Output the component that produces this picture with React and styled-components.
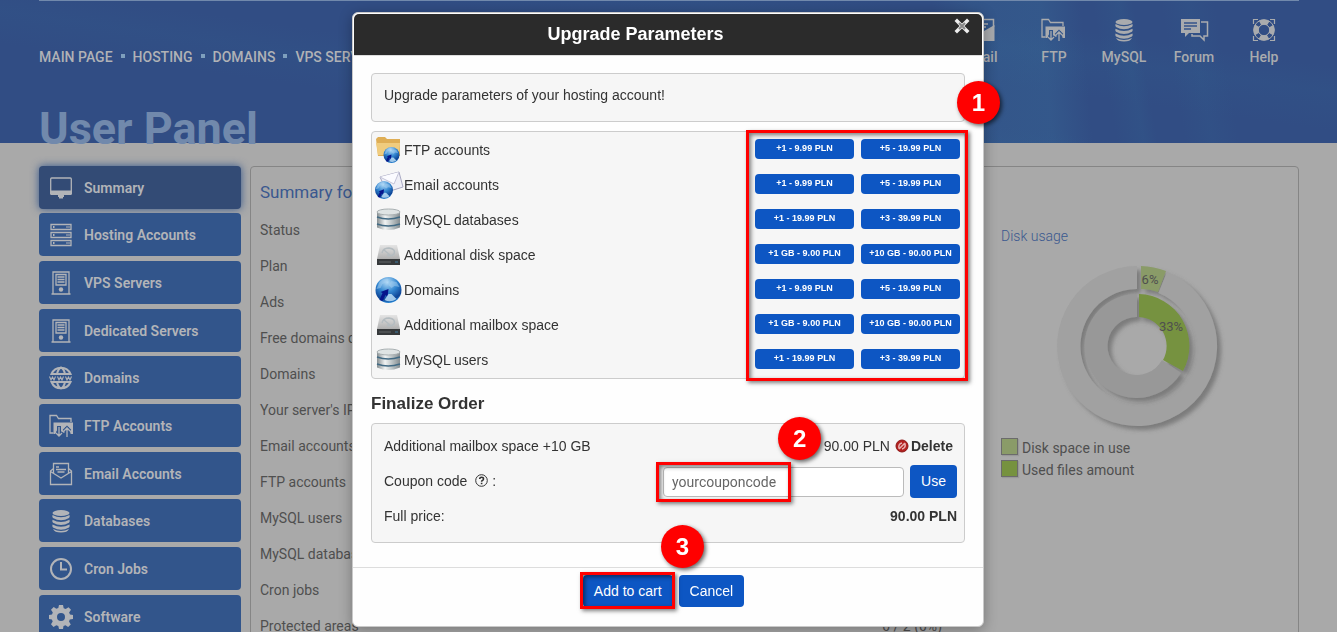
import React from 'react';
import styled, { createGlobalStyle, css } from 'styled-components';

const GlobalStyle = createGlobalStyle`
    * {
        box-sizing: border-box;
    }

    body {
        margin: 0;
        overflow: hidden;
        background-color: #a9a9a9;
        font-family: Roboto, sans-serif;
        font-size: 14px;
        color: #4f4f4f;
    }

    ul, h1, h2, h3, p {
        margin: 0;
        padding: 0;
        list-style-type: none;
    }

    a {
        color: inherit;
        text-decoration: none;
    }
`;

const StyledPage = styled.div`
    height: 100vh;
    overflow: hidden;
`;

const StyledHeader = styled.header`
    height: 143px;
    padding: 0 38px 0 39px;
    background-color: #314d84;
    background-image:
        linear-gradient(85deg, transparent 70%, rgba(60, 120, 160, 0.2) 73%, rgba(60, 120, 160, 0.25) 78%, transparent 81%),
        linear-gradient(80deg, transparent 82%, rgba(50, 100, 145, 0.2) 84%, transparent 85%, transparent 87%, rgba(50, 100, 145, 0.15) 89%, transparent 91%),
        linear-gradient(8deg, transparent 30%, rgba(50, 100, 145, 0.12) 40%, transparent 48%, transparent 60%, rgba(50, 100, 145, 0.14) 72%, transparent 80%);

    .bar {
        display: flex;
        justify-content: space-between;
        height: 107px;
        border-top: 1px solid #7189ac;
    }

    h1 {
        color: #7189ac;
        font-size: 45px;
        font-weight: 700;
        line-height: 44px;
    }
`;

const MainNav = styled.nav`
    display: flex;
    align-items: center;
    align-self: flex-start;
    gap: 8px;
    margin-top: 46px;
    color: #b0b2b6;
    font-weight: 500;
    line-height: 20px;
    white-space: nowrap;

    i {
        width: 4px;
        height: 4px;
        margin-bottom: 2px;
        background-color: #7e9fbd;
    }
`;

const QuickLinks = styled.nav`
    display: flex;
    margin-top: 17px;

    a {
        display: flex;
        flex-direction: column;
        align-items: center;
        gap: 5px;
        width: 70px;
        color: #a9abae;
        font-weight: 500;
        line-height: 20px;
    }
`;

const StyledMain = styled.main`
    display: flex;
    align-items: flex-start;
    gap: 9px;
    padding: 23px 38px 0 39px;
`;

const Sidebar = styled.ul`
    flex: none;
    width: 202px;

    li + li {
        margin-top: 5px;
    }

    li:nth-child(3n + 2) {
        margin-top: 4px;
    }
`;

const SideLink = styled.a`
    display: flex;
    align-items: center;
    gap: 11px;
    height: 43px;
    padding-left: 10px;
    border-radius: 4px;
    background-color: #32558b;
    color: #b2b4b8;
    font-weight: 600;

    ${({ $active }) => $active && css`
        background-color: #334b75;
        box-shadow: 0 0 8px #32558b;
    `}
`;

const Content = styled.section`
    display: flex;
    flex: 1;
    justify-content: space-between;
    min-height: 500px;
    padding: 7px 0 0 9px;
    border: 1px solid #858585;
    border-radius: 4px;

    .summary {
        flex: 1;
    }

    h2 {
        margin-bottom: 2px;
        color: #3a588f;
        font-size: 17px;
        font-weight: 400;
        line-height: 36px;
    }

    h3 {
        color: #3a588f;
        font-size: 14px;
        font-weight: 300;
        line-height: 20px;
    }
`;

const SummaryTable = styled.table`
    width: 100%;
    border-collapse: collapse;
    line-height: 20px;

    th, td {
        height: 36px;
        padding: 0;
        font-weight: 400;
        text-align: left;
    }

    td {
        text-align: right;
    }
`;

const Usage = styled.aside`
    width: 297px;
    margin-left: 59px;
    padding-top: 52px;

    svg {
        display: block;
        margin: 10px 0 0 46px;
    }

    ul {
        margin-top: 1px;
    }
`;

const Legend = styled.li`
    display: flex;
    gap: 4px;
    height: 22px;
    line-height: 22px;

    &::before {
        content: '';
        width: 15px;
        height: 15px;
        margin-top: 1px;
        border: 1px solid #6b6b6b;
        background-color: ${({ $color }) => $color};
        box-shadow: 1px 1px 1px #999;
    }
`;

const Overlay = styled.div`
    position: fixed;
    inset: 0;
    display: flex;
    align-items: flex-start;
    justify-content: center;
    padding: 12px 1px 0 0;
`;

const Dialog = styled.section`
    width: 632px;
    border: 1px solid #c9c9c9;
    border-radius: 6px;
    background-color: #fefefe;
    box-shadow: 0 3px 14px rgba(0, 0, 0, 0.3);
    color: #333;
    font-family: 'Liberation Sans', Arial, sans-serif;
    line-height: 20px;
`;

const DialogHeader = styled.header`
    display: flex;
    align-items: flex-start;
    height: 42px;
    margin: 1px 1px 0;
    padding-right: 12px;
    border-bottom: 1px solid #ddd;
    border-radius: 5px 5px 0 0;
    background-color: #2b2b2b;

    h2 {
        flex: 1;
        color: #fff;
        font-size: 18px;
        line-height: 40px;
        text-align: center;
    }
`;

const CloseButton = styled.button`
    width: 16px;
    height: 16px;
    margin: 4px 0 0 37px;
    padding: 0;
    border: 0;
    background: none;

    svg {
        display: block;
    }
`;

const DialogBody = styled.div`
    padding: 17px 18px 24px;

    h3 {
        margin: 15px 0 9px;
        font-size: 17px;
        line-height: 20px;
    }
`;

const Panel = styled.div`
    border: 1px solid #ccc;
    border-radius: 4px;
    background-color: #f6f6f6;
`;

const Notice = styled(Panel)`
    margin-bottom: 9px;
    padding: 11px 12px 16px;
`;

const Options = styled(Panel)`
    display: flex;
    justify-content: space-between;
    padding: 0 3px 1px;
`;

const OptionNames = styled.ul`
    li {
        display: flex;
        align-items: center;
        gap: 3px;
        height: 35px;
        line-height: 20px;
    }
`;

const OptionPrices = styled.div`
    position: relative;
    display: grid;
    grid-template-columns: 99px 99px;
    grid-auto-rows: 20px;
    gap: 15px 7px;
    padding: 7px 1px 0 0;
`;

const Button = styled.button`
    padding: 0 11px;
    border: 0;
    border-radius: 4px;
    background-color: #0d56c3;
    color: #fff;
    font-family: inherit;
    font-size: 14px;
    line-height: ${({ $tall }) => ($tall ? '33px' : '32px')};
`;

const PriceButton = styled(Button)`
    padding: 0 0 2px;
    font-size: 9px;
    font-weight: 700;
    line-height: 18px;
`;

const Order = styled(Panel)`
    padding: 5px 7px 8px 12px;
`;

const OrderRow = styled.div`
    display: flex;
    align-items: center;
    justify-content: space-between;
    height: 35px;

    > span, label, strong {
        padding-bottom: 2px;
    }

    label {
        display: flex;
        align-items: center;
        gap: 4px;
    }

    label svg {
        margin-left: 4px;
    }
`;

const Amount = styled.span`
    display: flex;
    align-items: center;
    gap: 5px;
    padding-right: 4px;

    a {
        display: flex;
        align-items: center;
        gap: 2px;
        font-weight: 700;
    }
`;

const Coupon = styled.div`
    position: relative;
    display: flex;
    align-items: center;
    gap: 6px;

    input {
        width: 241px;
        height: 30px;
        padding: 0 8px;
        border: 1px solid #bbb;
        border-radius: 4px;
        background-color: #fff;
        color: #666;
        font-family: Roboto, sans-serif;
        font-size: 14px;
    }
`;

const DialogFooter = styled.footer`
    display: flex;
    justify-content: center;
    gap: 6px;
    padding: 7px 9px 19px 0;
    border-top: 1px solid #ddd;
`;

const CartAction = styled.div`
    position: relative;
`;

// red frames drawn over the controls of each step
const Frame = styled.span`
    position: absolute;
    inset: ${({ $inset }) => $inset};
    border: 3px solid #f00;
    box-shadow: 2px 2px 4px rgba(0, 0, 0, 0.5), inset 2px 2px 4px rgba(0, 0, 0, 0.5);
    pointer-events: none;
`;

const Step = styled.span`
    position: absolute;
    top: ${({ $top }) => $top};
    left: ${({ $left }) => $left};
    width: 43px;
    height: 43px;
    border-radius: 50%;
    background-color: #f00;
    box-shadow: 2px 2px 4px rgba(0, 0, 0, 0.6);
    color: #fff;
    font-size: 24px;
    font-weight: 700;
    line-height: 43px;
    text-align: center;
`;

const line = { fill: 'none', stroke: 'currentColor', strokeWidth: 1.5 };

const FtpShape = () => (
    <>
        <path d="M4.500 19H1V1.500h6.500l2 3H22V8" {...line} strokeWidth="1.300" />
        <path d="M4.500 8.500H24V20h-2.500v-1L19 14l-4 5-3.500-2L10 13l-3 5v2H4.500z" fill="currentColor" />
        <path d="M10 12v10M18 23V13" fill="none" stroke="#32558b" strokeWidth="4" />
        <path d="M10 13v9m-3-3 3 3 3-3M18 23v-9m-3 3 3-3 3 3" fill="none" stroke="#32558b" strokeWidth="3.500" />
        <path d="M10 13v9m-3-3 3 3 3-3M18 23v-9m-3 3 3-3 3 3" {...line} strokeWidth="1.300" />
    </>
);

const DatabaseShape = () => (
    <g fill="currentColor">
        <ellipse cx="12" cy="4" rx="8.500" ry="3" />
        <path d="M3.500 6q8.500 4.500 17 0 .6 1.800-.5 3-8 4.500-16 0-1.100-1.200-.5-3zM3.500 10.700q8.500 4.500 17 0 .6 1.800-.5 3-8 4.500-16 0-1.100-1.200-.5-3zM3.500 15.500q8.500 4.500 17 0 .6 1.800-.5 3-8 4.500-16 0-1.100-1.200-.5-3z" />
        <path d="M4 20q8 4 16 0-1.500 3.500-8 3.500T4 20z" />
    </g>
);

const shapes = {
    summary: (
        <>
            <rect x="1.700" y="2" width="20.600" height="16" rx="1" {...line} strokeWidth="1.300" />
            <path d="M1 14.500h22V18l-1 1h-7v2h-1v1.500h-4V21H9v-2H2l-1-1z" fill="currentColor" />
        </>
    ),
    hosting: (
        <>
            <path d="M2 1.500h20v5H2zM2 9.500h20v5H2zM2 17.500h20v5H2z" {...line} strokeWidth="1.300" />
            <path d="M4 4h1.500m12 0h1m1 0h1M4 12h1.500m12 0h1m1 0h1M4 20h1.500m12 0h1m1 0h1" {...line} strokeWidth="2" />
        </>
    ),
    server: (
        <>
            <path d="M4 22.500V1h16v21.500M2.500 23h19M7 3.500h10V14H7zM8.500 6h7M8.500 8.500h7M8.500 11h7" {...line} strokeWidth="1.300" />
            <circle cx="12" cy="18.500" r="2.200" fill="currentColor" />
        </>
    ),
    domains: (
        <>
            <path d="M2.500 8a10.300 10.300 0 0 1 19 0zM2.500 16a10.300 10.300 0 0 0 19 0zM8 8q1-5 4-6.500 3 1.500 4 6.500M8 16q1 5 4 6.500 3-1.500 4-6.500" {...line} strokeWidth="2" />
            <path d="m.5 10.500 1.500 3.500 1.500-3 1.500 3 1.500-3.500m2 0 1.500 3.500 1.500-3 1.500 3 1.500-3.500m2 0 1.500 3.500 1.500-3 1.500 3 1.500-3.500" {...line} strokeWidth="1.100" />
        </>
    ),
    ftp: <FtpShape />,
    email: (
        <>
            <path d="M4.500 11V1.500h15V11M4.500 6.500 1.500 9v13.500h21V9l-3-2.500M1.500 9.500 12 16l10.500-6.500" {...line} strokeWidth="1.300" />
            <path d="M7 5h3M7 7.500h10M8.500 10h7" {...line} strokeWidth="1.300" />
        </>
    ),
    database: <DatabaseShape />,
    cron: (
        <>
            <circle cx="12" cy="12" r="10" {...line} strokeWidth="2" />
            <path d="M12 5v7.500h6" {...line} strokeWidth="2" />
        </>
    ),
    software: (
        <path
            fill="currentColor"
            fillRule="evenodd"
            d="M10 0h4l.7 3.300 2 .8L19.500 2.200l2.500 2.600-1.900 2.700.9 2.100L24 10v4l-3.200.6-.8 2 1.800 2.900-2.700 2.500-2.600-1.800-2 .9L14 24h-4l-.7-3-2-.8-2.800 1.700L2 19.200l1.700-2.700-.8-2L0 14v-4l3-.6.8-2L2 4.700 4.700 2l2.600 1.800 2-.8zM12 8a4 4 0 1 0 0 8 4 4 0 0 0 0-8z"
        />
    ),
    mail: (
        <>
            <path d="M3 13V1.500h18.500V9M7 6h9M7 9h7" {...line} />
            <path d="M1 13h11L22.500 7v16H1z" fill="currentColor" />
        </>
    ),
    forum: (
        <>
            <path d="M0 1h19v14H8l-4 4v-4H0z" fill="currentColor" />
            <path d="M3 5h13M3 8h13M3 11h7" fill="none" stroke="#35548a" strokeWidth="1.500" />
            <path d="M20 4h6.500v14H23v4l-4-4h-8v-2" {...line} />
        </>
    ),
    help: (
        <>
            <circle cx="12" cy="12" r="8" fill="none" stroke="currentColor" strokeWidth="5" strokeDasharray="8.566 4" strokeDashoffset="4.283" />
            <circle cx="12" cy="12" r="10.300" {...line} strokeWidth="1" />
            <circle cx="12" cy="12" r="5.700" {...line} strokeWidth="1" />
            <path d="M1.500 6V1.500H6M18 1.500h4.500V6M22.500 18v4.500H18M6 22.500H1.500V18" {...line} strokeWidth="1.200" />
        </>
    ),
};

const Icon = ({ name, wide }) => (
    <svg width={wide ? 28 : 24} height="24" viewBox={wide ? '-1 0 28 24' : '0 0 24 24'} overflow="visible" aria-hidden="true">
        {shapes[name]}
    </svg>
);

const Globe = ({ x, y, r }) => (
    <g transform={`translate(${x} ${y}) scale(${r / 13})`}>
        <circle r="13" fill="url(#globe)" />
        <path d="M-9-8q4-4 9-3l-1 3-5 2-2 4-4 1zM3-9l5 1 3 5-5-1-3 2-3-3z" fill="#a9d2f2" opacity="0.5" />
        <path d="M-9 10-6 3l-2-1 8-3-1 8-2-2-3 6z" fill="#06158c" />
        <path d="M-4 10 0 4h3l5 5q-6 4-12 1z" fill="#c4e7fc" opacity="0.8" />
    </g>
);

const optionArt = {
    ftp: (
        <>
            <path d="M1 3 3 1h7l2 2h13v17H3z" fill="#dfae55" />
            <path d="M1 7h24l-1 12H3z" fill="#f0cc7e" />
            <Globe x="16.500" y="19" r="8" />
        </>
    ),
    email: (
        <>
            <path d="m5 6 19-5 4 15-16 5z" fill="#eeeef6" stroke="#a9a9c3" />
            <path d="m5 6 14 7 5-12" fill="#fbfbff" stroke="#c4c4d8" />
            <Globe x="9" y="19" r="9" />
        </>
    ),
    database: (
        <>
            <path d="M2 5.500v16q11 5 23 0v-16z" fill="url(#metal)" />
            <ellipse cx="13.500" cy="6" rx="11.500" ry="3" fill="#dfe4e4" stroke="#a9b0b2" />
            <path d="M2 11q11 4 23 0M2 18q11 4 23 0" fill="none" stroke="#416a84" strokeWidth="1.500" />
        </>
    ),
    disk: (
        <>
            <path d="M5 4h17l3 14H2z" fill="url(#plate)" />
            <path d="M7 12q1-5 7-5 7 1 5 6-3 3-7 1M9 9l6 5" fill="none" stroke="#b4bcc0" strokeWidth="1.500" />
            <path d="M2 18h23v6H2z" fill="#36393b" />
            <path d="M4 21h12" stroke="#626669" />
            <path d="M20 21h3" stroke="#3f7da2" />
        </>
    ),
    domains: <Globe x="13.500" y="14" r="13" />,
};

const OptionIcon = ({ name }) => (
    <svg width="26" height="28" viewBox="0 0 26 28" overflow="visible" aria-hidden="true">
        <defs>
            <radialGradient id="globe" cx="0.450" cy="0.200" r="0.850">
                <stop offset="0" stopColor="#b5dcf7" />
                <stop offset="0.450" stopColor="#3286d0" />
                <stop offset="0.800" stopColor="#0d4395" />
                <stop offset="1" stopColor="#36a7f5" />
            </radialGradient>
            <linearGradient id="metal">
                <stop offset="0" stopColor="#858d90" />
                <stop offset="0.350" stopColor="#f0f3f3" />
                <stop offset="0.700" stopColor="#b4bcbe" />
                <stop offset="1" stopColor="#858d90" />
            </linearGradient>
            <linearGradient id="plate" x2="0" y2="1">
                <stop offset="0" stopColor="#e4e4e4" />
                <stop offset="1" stopColor="#b0b0b0" />
            </linearGradient>
        </defs>
        {optionArt[name]}
    </svg>
);

const navItems = ['MAIN PAGE', 'HOSTING', 'DOMAINS', 'VPS SERVERS'];

const quickItems = [
    { label: 'Mail', icon: 'mail' },
    { label: 'FTP', icon: 'ftp', wide: true },
    { label: 'MySQL', icon: 'database' },
    { label: 'Forum', icon: 'forum', wide: true },
    { label: 'Help', icon: 'help' },
];

const sideItems = [
    { label: 'Summary', icon: 'summary' },
    { label: 'Hosting Accounts', icon: 'hosting' },
    { label: 'VPS Servers', icon: 'server' },
    { label: 'Dedicated Servers', icon: 'server' },
    { label: 'Domains', icon: 'domains' },
    { label: 'FTP Accounts', icon: 'ftp' },
    { label: 'Email Accounts', icon: 'email' },
    { label: 'Databases', icon: 'database' },
    { label: 'Cron Jobs', icon: 'cron' },
    { label: 'Software', icon: 'software' },
];

const summaryRows = [
    ['Status'],
    ['Plan'],
    ['Ads'],
    ['Free domains quota'],
    ['Domains'],
    ["Your server's IP"],
    ['Email accounts'],
    ['FTP accounts'],
    ['MySQL users'],
    ['MySQL databases'],
    ['Cron jobs'],
    ['Protected areas', '0 / 2 (0%)'],
];

const options = [
    { name: 'FTP accounts', icon: 'ftp', prices: ['+1 - 9.99 PLN', '+5 - 19.99 PLN'] },
    { name: 'Email accounts', icon: 'email', prices: ['+1 - 9.99 PLN', '+5 - 19.99 PLN'] },
    { name: 'MySQL databases', icon: 'database', prices: ['+1 - 19.99 PLN', '+3 - 39.99 PLN'] },
    { name: 'Additional disk space', icon: 'disk', prices: ['+1 GB - 9.00 PLN', '+10 GB - 90.00 PLN'] },
    { name: 'Domains', icon: 'domains', prices: ['+1 - 9.99 PLN', '+5 - 19.99 PLN'] },
    { name: 'Additional mailbox space', icon: 'disk', prices: ['+1 GB - 9.00 PLN', '+10 GB - 90.00 PLN'] },
    { name: 'MySQL users', icon: 'database', prices: ['+1 - 19.99 PLN', '+3 - 39.99 PLN'] },
];

const UsageChart = () => (
    <svg width="180" height="180" viewBox="-90 -90 180 180" role="img" aria-label="Disk usage">
        <defs>
            <filter id="drop" x="-20%" y="-20%" width="150%" height="150%">
                <feDropShadow dx="4" dy="4" stdDeviation="2" floodColor="#555" floodOpacity="0.550" />
            </filter>
        </defs>
        <g filter="url(#drop)">
            <path d="M0-80A80 80 0 1 0 30-74.200L21.400-53A57 57 0 1 1 0-57z" fill="#a1a1a1" />
            <path d="M4-80A80 80 0 0 1 29-75L21-54A57 57 0 0 0 4-57z" fill="#8a9b68" />
        </g>
        <g filter="url(#drop)">
            <path d="M0-52A52 52 0 1 0 44 27L25 14A29 29 0 1 1 0-29z" fill="#989898" />
            <path d="M2-52A52 52 0 0 1 46 25L26 14A29 29 0 0 0 2-29z" fill="#76923f" />
        </g>
        <g fill="#4f4f4f" fontSize="13" textAnchor="middle">
            <text x="13" y="-62">6%</text>
            <text x="34" y="-15">33%</text>
        </g>
    </svg>
);

const UpgradeDialog = () => (
    <Dialog role="dialog" aria-labelledby="upgrade-title">
        <DialogHeader>
            <h2 id="upgrade-title">Upgrade Parameters</h2>
            <CloseButton aria-label="Close">
                <svg width="16" height="16" viewBox="0 0 16 16">
                    <path d="m3 3 10 10M13 3 3 13" stroke="#eee" strokeWidth="3.500" strokeLinecap="square" />
                    <path d="m5 5 6 6M11 5l-6 6" stroke="#888" strokeWidth="2" />
                </svg>
            </CloseButton>
        </DialogHeader>

        <DialogBody>
            <Notice>Upgrade parameters of your hosting account!</Notice>

            <Options>
                <OptionNames>
                    {options.map(({ name, icon }) => (
                        <li key={name}><OptionIcon name={icon} />{name}</li>
                    ))}
                </OptionNames>
                <OptionPrices>
                    {options.map(({ name, prices }) => prices.map((price) => (
                        <PriceButton key={name + price}>{price}</PriceButton>
                    )))}
                    <Frame $inset="-2px -7px -4px -9px" />
                    <Step $top="-51px" $left="202px">1</Step>
                </OptionPrices>
            </Options>

            <h3>Finalize Order</h3>

            <Order>
                <OrderRow>
                    <span>Additional mailbox space +10 GB</span>
                    <Amount>
                        90.00 PLN
                        <a href="#delete">
                            <svg width="14" height="14" viewBox="0 0 14 14" aria-hidden="true">
                                <circle cx="7" cy="7" r="6" fill="#b3201f" stroke="#8c1616" />
                                <path d="M4 9.500Q3 5 7 4M10 4.500Q11 9 7 10M4 10l6-6" fill="none" stroke="#e9b0b0" strokeWidth="1.500" />
                            </svg>
                            Delete
                        </a>
                    </Amount>
                </OrderRow>
                <OrderRow>
                    <label htmlFor="coupon">
                        Coupon code
                        <svg width="13" height="13" viewBox="0 0 13 13" aria-hidden="true">
                            <circle cx="6.500" cy="6.500" r="5.800" fill="none" stroke="#333" />
                            <path d="M4.700 5q0-1.700 1.900-1.700T8.500 4.900q0 1-1.100 1.500-.8.400-.8 1.300M6.600 8.800v1.500" fill="none" stroke="#333" strokeWidth="1.600" />
                        </svg>
                        :
                    </label>
                    <Coupon>
                        <input id="coupon" type="text" defaultValue="yourcouponcode" />
                        <Button $tall>Use</Button>
                        <Frame $inset="-3px 166px -4px -7px" />
                        <Step $top="-48px" $left="115px">2</Step>
                    </Coupon>
                </OrderRow>
                <OrderRow>
                    <span>Full price:</span>
                    <strong>90.00 PLN</strong>
                </OrderRow>
            </Order>
        </DialogBody>

        <DialogFooter>
            <CartAction>
                <Button>Add to cart</Button>
                <Frame $inset="-3px -2px -2px -3px" />
                <Step $top="-50px" $left="78px">3</Step>
            </CartAction>
            <Button>Cancel</Button>
        </DialogFooter>
    </Dialog>
);

const App = () => {
  return (
    <StyledPage>
        <GlobalStyle />
        <StyledHeader>
            <div className="bar">
                <MainNav>
                    {navItems.map((item, index) => (
                        <React.Fragment key={item}>
                            {index > 0 && <i />}
                            <a href="#">{item}</a>
                        </React.Fragment>
                    ))}
                </MainNav>
                <QuickLinks>
                    {quickItems.map(({ label, icon, wide }) => (
                        <a href="#" key={label}>
                            <Icon name={icon} wide={wide} />
                            {label}
                        </a>
                    ))}
                </QuickLinks>
            </div>
            <h1>User Panel</h1>
        </StyledHeader>

        <StyledMain>
            <Sidebar>
                {sideItems.map(({ label, icon }) => (
                    <li key={label}>
                        <SideLink href="#" $active={label === 'Summary'}>
                            <Icon name={icon} />
                            {label}
                        </SideLink>
                    </li>
                ))}
            </Sidebar>

            <Content>
                <div className="summary">
                    <h2>Summary for</h2>
                    <SummaryTable>
                        <tbody>
                            {summaryRows.map(([label, value]) => (
                                <tr key={label}>
                                    <th scope="row">{label}</th>
                                    <td>{value}</td>
                                </tr>
                            ))}
                        </tbody>
                    </SummaryTable>
                </div>

                <Usage>
                    <h3>Disk usage</h3>
                    <UsageChart />
                    <ul>
                        <Legend $color="#8a9b68">Disk space in use</Legend>
                        <Legend $color="#76923f">Used files amount</Legend>
                    </ul>
                </Usage>
            </Content>
        </StyledMain>

        <Overlay>
            <UpgradeDialog />
        </Overlay>
    </StyledPage>
  );
}

export default App;
